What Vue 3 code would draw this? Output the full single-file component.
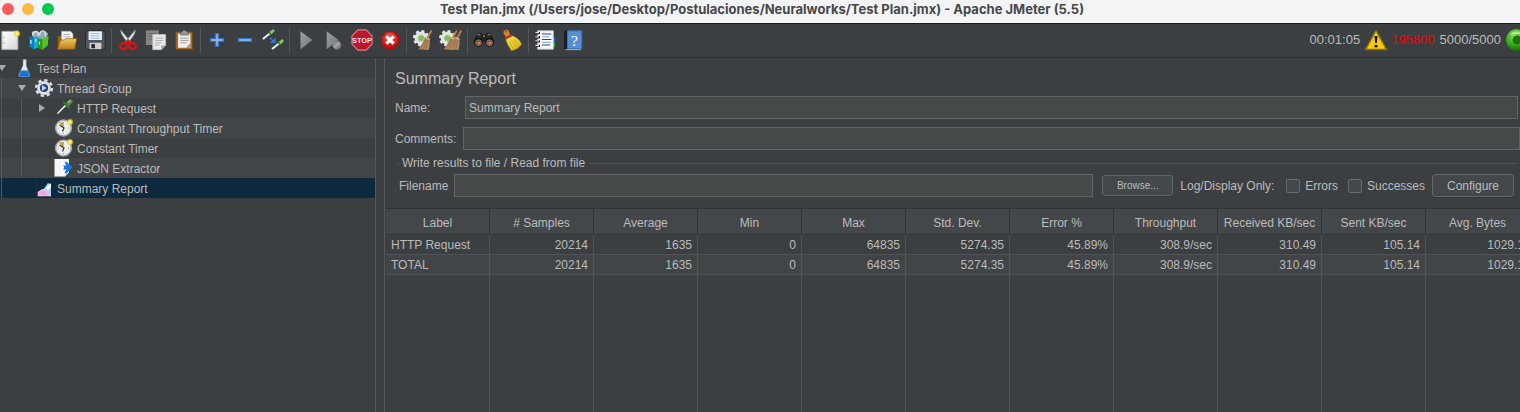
<script setup>
import { ref } from 'vue'

const name = ref('Summary Report')
const comments = ref('')
const filename = ref('')
const errors = ref(false)
const successes = ref(false)

const groups = [
  ['new', 'templates', 'open', 'save'],
  ['cut', 'copy', 'paste'],
  ['expand', 'collapse', 'toggle'],
  ['start', 'start without pauses', 'stop', 'shutdown'],
  ['clear', 'clear all'],
  ['search', 'reset search'],
  ['function helper', 'help']
]

const tree = [
  { label: 'Test Plan', icon: 'flask', level: 0, arrow: 'down' },
  { label: 'Thread Group', icon: 'gear', level: 1, arrow: 'down' },
  { label: 'HTTP Request', icon: 'dropper', level: 2, arrow: 'right' },
  { label: 'Constant Throughput Timer', icon: 'clock', level: 2 },
  { label: 'Constant Timer', icon: 'clock', level: 2 },
  { label: 'JSON Extractor', icon: 'extract', level: 2 },
  { label: 'Summary Report', icon: 'chart', level: 1, selected: true }
]

const columns = ['Label', '# Samples', 'Average', 'Min', 'Max', 'Std. Dev.', 'Error %', 'Throughput', 'Received KB/sec', 'Sent KB/sec', 'Avg. Bytes']
const rows = [
  ['HTTP Request', '20214', '1635', '0', '64835', '5274.35', '45.89%', '308.9/sec', '310.49', '105.14', '1029.1'],
  ['TOTAL', '20214', '1635', '0', '64835', '5274.35', '45.89%', '308.9/sec', '310.49', '105.14', '1029.1']
]
</script>

<template>
  <div class="window">
    <svg class="defs" width="0" height="0" aria-hidden="true">
      <defs>
        <linearGradient id="gold" x1="0" y1="0" x2="0" y2="1"><stop offset="0" stop-color="#f3c969" /><stop offset="1" stop-color="#b97f17" /></linearGradient>
        <linearGradient id="grey" x1="0" y1="0" x2="1" y2="1"><stop offset="0" stop-color="#a0a0a0" /><stop offset="1" stop-color="#747474" /></linearGradient>
        <linearGradient id="paper" x1="0" y1="0" x2="1" y2="1"><stop offset="0" stop-color="#ffffff" /><stop offset="1" stop-color="#d6d6d6" /></linearGradient>
        <linearGradient id="bristle" x1="0" y1="0" x2="1" y2="1"><stop offset="0" stop-color="#fbe66a" /><stop offset="1" stop-color="#d5b20c" /></linearGradient>
        <radialGradient id="red" cx=".5" cy=".3" r=".7"><stop offset="0" stop-color="#f35c4c" /><stop offset="1" stop-color="#bb0b0b" /></radialGradient>
        <radialGradient id="green" cx=".4" cy=".3" r=".75"><stop offset="0" stop-color="#8fe56a" /><stop offset=".55" stop-color="#3aa81c" /><stop offset="1" stop-color="#116004" /></radialGradient>
        <radialGradient id="spark"><stop offset="0" stop-color="#fffbb0" /><stop offset=".5" stop-color="#f3df35" /><stop offset="1" stop-color="#e8d040" stop-opacity="0" /></radialGradient>
        <g id="straw">
          <path d="M20.5 1l1.6 1-4.600 9-2.200-1.100z" fill="#b8834c" />
          <path d="M14.300 8.700l5 2.300c.5 4-.2 8-1 12L7 22c3.500-3.500 5.500-8.500 7.300-13.300z" fill="#b08a62" />
          <path d="M14.800 11l-5 10.500M16 11.500l-3.600 10.800M17.400 12l-2.500 10.500" stroke="#8a673f" stroke-width=".7" fill="none" />
          <path d="M14.300 9l5 2.300" stroke="#dcb888" stroke-width="1.300" />
        </g>
        <g id="cog">
          <circle cx="9" cy="9" r="5" fill="none" stroke="#e4e4e4" stroke-width="4.500" />
          <circle cx="9" cy="9" r="7.500" fill="none" stroke="#e4e4e4" stroke-width="3" stroke-dasharray="3.200 2.690" />
          <circle cx="9" cy="9" r="3.300" fill="#78c93f" stroke="#b8b8b8" />
        </g>
        <g id="pipette">
          <path d="M0 9L7.500 3" stroke="#8d9a91" stroke-width="2.600" />
          <path d="M0 8.700L7.500 2.700" stroke="#f0f3ef" stroke-width="1.600" />
          <path d="M8 2.500L11 0" stroke="#7cc862" stroke-width="3.400" stroke-linecap="round" />
          <path d="M6.200.8l3.200 3.800" stroke="#3a5a34" stroke-width="1.100" />
        </g>
      </defs>
    </svg>

    <header class="titlebar">
      <div class="lights"><i class="close"></i><i class="minimise"></i><i class="zoom"></i></div>
      <h1>Test Plan.jmx (/Users/jose/Desktop/Postulaciones/Neuralworks/Test Plan.jmx) - Apache JMeter (5.5)</h1>
    </header>

    <div class="toolbar">
      <div v-for="(group, g) in groups" :key="g" class="group">
        <button v-for="icon in group" :key="icon" type="button" :aria-label="icon">
          <svg viewBox="0 0 24 24" aria-hidden="true">
            <template v-if="icon === 'new'">
              <path d="M2 2.500h17.500v20H2z" fill="url(#paper)" stroke="#a6a6a6" />
              <path d="M4 8.500v1.500M4 14.500V16" stroke="#888" />
              <circle cx="18.500" cy="5" r="4.200" fill="url(#spark)" />
            </template>
            <template v-else-if="icon === 'templates'">
              <path d="M4 3l6-1.500 2 2L18 2l4 3-2 6-14 2z" fill="#93aab1" />
              <path d="M5 7c0-4 5-6 6-2v3m2-1c-1-5 5-7 6-2v3" fill="none" stroke="#dbe7e9" stroke-width="1.500" />
              <path d="M1.500 8l5 1v13l-5-2.500z" fill="#087ebb" /><path d="M6.500 9l5-1v12l-5 2z" fill="#19a9e5" />
              <path d="M10.500 10l5 1v12l-5-2.500z" fill="#239b19" /><path d="M15.500 11l7-3-1 10-6 5z" fill="#51c42c" />
              <path d="M3.200 12v4M8.500 11v3M12.500 14v3" stroke="#d9f4f0" stroke-width="1.400" />
            </template>
            <template v-else-if="icon === 'open'">
              <path d="M2 8h6l2 2h10v10H2z" fill="#98630c" />
              <path d="M6 2.500h10l2.500 3V14H6z" fill="#f5f5f5" stroke="#aaa" stroke-width=".6" />
              <path d="M8 6h7M8 8.500h8" stroke="#999" stroke-width=".8" />
              <path d="M5 12h4l1.500-1.500h12L20.500 22H1.500z" fill="url(#gold)" stroke="#94610b" stroke-width=".8" />
            </template>
            <template v-else-if="icon === 'save'">
              <path d="M2 2h20l1 2v18H3l-1.500-2z" fill="#51565e" stroke="#25282c" />
              <path d="M5 2.500h14.500V12H5z" fill="#eef4fa" /><path d="M7 5h10M7 7.500h10M7 10h10" stroke="#8fb4da" />
              <path d="M6 15h13v7H6z" fill="#cfcfcf" /><path d="M8 16.500h4v4.500H8z" fill="#24272b" />
            </template>
            <template v-else-if="icon === 'cut'">
              <path d="M4 1c0 4 3.500 9 8.500 14l2-1.500zM20 1c0 4-3.500 9-8.500 14l-2-1.500z" fill="#e3e3e3" stroke="#989898" stroke-width=".7" />
              <ellipse cx="7.300" cy="18.500" rx="3.800" ry="3.200" transform="rotate(-25 7.300 18.500)" fill="none" stroke="#d61518" stroke-width="2.600" />
              <ellipse cx="16.700" cy="18.500" rx="3.800" ry="3.200" transform="rotate(25 16.700 18.500)" fill="none" stroke="#d61518" stroke-width="2.600" />
              <path d="M9 16l3-2.500 3 2.500" fill="none" stroke="#d61518" stroke-width="2.600" />
            </template>
            <template v-else-if="icon === 'copy'">
              <path d="M1 1.500h14v16H1z" fill="#858585" /><path d="M3.500 5h9M3.500 8h6M3.500 11h5" stroke="#696969" />
              <path d="M8.500 6h14v12l-4.500 4.500H8.500z" fill="#e9e9e9" stroke="#bdbdbd" /><path d="M11 10h9M11 12.500h9M11 15h7M11 17.500h5" stroke="#aaa" /><path d="M18 22.500V18h4.500z" fill="#999" />
            </template>
            <template v-else-if="icon === 'paste'">
              <path d="M3 3h18.500v19.500H3z" fill="#a96a1d" stroke="#704411" /><path d="M5.500 5h13.500v15.500H5.500z" fill="#ececec" />
              <path d="M8 3.500h2l1-2h3l1 2h2v3H8z" fill="#999d9f" stroke="#555" stroke-width=".7" /><path d="M8 10h9M8 12.500h9M8 15h7" stroke="#9c9c9c" /><path d="M14 20.500l5-5v5z" fill="#999" />
            </template>
            <path v-else-if="icon === 'expand'" d="M10.500 5h3v5.500H19v3h-5.500V19h-3v-5.500H5v-3h5.500z" fill="#9ac5f2" stroke="#3775c4" stroke-width="1.500" />
            <path v-else-if="icon === 'collapse'" d="M5 10.500h14v3H5z" fill="#9ac5f2" stroke="#3775c4" stroke-width="1.500" />
            <template v-else-if="icon === 'toggle'">
              <use href="#pipette" x="1" y="2" /><use href="#pipette" x="11" y="13" />
              <path d="M8.500 9.500l5 4.500M14 10v4.500H9.500" fill="none" stroke="#347bd1" stroke-width="1.700" />
            </template>
            <path v-else-if="icon === 'start'" d="M6 2.500l13 9.500-13 10z" fill="url(#grey)" />
            <template v-else-if="icon === 'start without pauses'">
              <path d="M4 2.500l13 9.500-13 10z" fill="url(#grey)" /><circle cx="15" cy="17.500" r="4.500" fill="#8e8e8e" stroke="#777" /><path d="M12.300 20l5.400-5" stroke="#b6b6b6" stroke-width="1.300" />
            </template>
            <template v-else-if="icon === 'stop'">
              <path d="M7.500 1h9L23 7.500v9L16.500 23h-9L1 16.500v-9z" fill="#b7192a" stroke="#d98188" stroke-width="1.200" />
              <text x="12" y="15.500" text-anchor="middle" class="stop-word">STOP</text>
            </template>
            <template v-else-if="icon === 'shutdown'">
              <path d="M8.500 3h7l5.500 5.500v7L15.500 21h-7L3 15.500v-7z" fill="url(#red)" stroke="#c00c0c" stroke-width="1.500" /><path d="M8 8l8 8M16 8l-8 8" stroke="#fff" stroke-width="3.400" />
            </template>
            <template v-else-if="icon === 'clear'"><use href="#cog" x="1" y="1" /><use href="#straw" /></template>
            <template v-else-if="icon === 'clear all'"><use href="#cog" x="-1" y="1" /><use href="#straw" x="-3" /><use href="#straw" x="2" /></template>
            <template v-else-if="icon === 'search'">
              <path d="M6 4.500l4 1 1 6H2zM18 4.500l-4 1-1 6h9z" fill="#292929" stroke="#111" /><path d="M9.500 8h5v6h-5z" fill="#222" />
              <circle cx="6" cy="14.500" r="5" fill="#161616" /><circle cx="18" cy="14.500" r="5" fill="#161616" /><circle cx="6" cy="15" r="3.200" fill="#915032" stroke="#777" /><circle cx="18" cy="15" r="3.200" fill="#915032" stroke="#777" />
              <path d="M5 6l3 .5M16 6.500l3-.5M11 8h2" stroke="#a5a5a5" /><circle cx="6.500" cy="15.500" r="1.300" fill="#db8353" /><circle cx="18.500" cy="15.500" r="1.300" fill="#db8353" />
            </template>
            <template v-else-if="icon === 'reset search'">
              <path d="M2.500 4c0-4 6-4.500 6.500-.5l1.500 4-5 2z" fill="#d08a35" stroke="#7c4b14" stroke-width=".7" />
              <circle cx="5.500" cy="3" r=".9" fill="#5c3a12" />
              <path d="M5 10.500l7-3.500c5 2 9 5 10.500 9.500-2 3.500-6.500 6.500-11.500 7-2-4-5-8-6-13z" fill="url(#bristle)" stroke="#927500" stroke-width=".7" />
              <path d="M9 13l4.500 9M11.500 12l5.500 8M14 11.500l6 6.500" stroke="#c4a30f" stroke-width=".9" /><path d="M4.500 10.500l7.500-4" stroke="#c82d1b" stroke-width="2.500" />
            </template>
            <template v-else-if="icon === 'function helper'">
              <path d="M19 9h4v6h-4z" fill="#1471e2" /><path d="M19 15h4v5h-4z" fill="#23a62a" /><path d="M4 2h17v20H4z" fill="#fafafa" stroke="#ccc" />
              <path d="M8.500 5.500H19M8.500 11.500H19M8.500 17.500h9" stroke="#254a88" stroke-width="1.200" /><path d="M8.500 8.500h8M8.500 14.500h10" stroke="#6998d8" />
              <path d="M1.500 4.500h5M1.500 9h5M1.500 13.500h5M1.500 18.500h5" stroke="#111" stroke-width="2.500" /><path d="M1.500 4h4M1.500 8.500h4M1.500 13h4M1.500 18h4" stroke="#e3e3e3" stroke-width="1.400" />
            </template>
            <template v-else>
              <path d="M3 3l3-1.500v20L3 22.500z" fill="#172333" stroke="#111" /><path d="M6 2h15.500v19.500H6z" fill="#548fd5" stroke="#3874bc" /><path d="M3.500 22.500h17" stroke="#bbb" />
              <text x="13.500" y="18" text-anchor="middle" class="help-mark">?</text>
            </template>
          </svg>
        </button>
      </div>
      <div class="status">
        <span>00:01:05</span>
        <svg class="warning" viewBox="0 0 24 24" aria-hidden="true"><path d="M12 2.500L22.500 21.500h-21z" fill="#f6cd08" stroke="#8f7100" stroke-width="1.500" stroke-linejoin="round" /><path d="M10.500 8h3l-.6 7h-1.800z" fill="#171717" /><circle cx="12" cy="18" r="1.600" fill="#171717" /></svg>
        <span class="alert">195800</span>
        <span class="threads">5000/5000</span>
        <svg class="running" viewBox="0 0 24 24" aria-hidden="true"><circle cx="12" cy="12" r="11" fill="url(#green)" /><circle cx="12" cy="12" r="4.500" fill="#1d7110" /><path d="M5 7c3-5 11-5 14 0-4-1.500-10-1.500-14 0z" fill="#c9f5b3" opacity=".7" /></svg>
      </div>
    </div>

    <div class="body">
      <nav class="tree" aria-label="Test plan elements">
        <ul>
          <li v-for="(node, i) in tree" :key="i" :class="{ selected: node.selected }">
            <span v-for="n in node.level" :key="n" class="guide"></span>
            <span class="toggle" :class="node.arrow"></span>
            <svg viewBox="0 0 20 20" aria-hidden="true">
              <template v-if="node.icon === 'flask'">
                <path d="M9.200 1.500h3v6l3.300 9c.5 1.500 0 2-1.500 2H6.500c-1.500 0-2-.5-1.500-2l4.200-9z" fill="#dbe8ef" stroke="#8ba0b0" stroke-width=".6" /><path d="M7.300 12.500h6.600l1.700 5-.8 1H5.800l-.8-1z" fill="#1476d8" /><path d="M10 3.500v4l-2 4" stroke="#fff" fill="none" />
              </template>
              <template v-else-if="node.icon === 'gear'">
                <circle cx="10" cy="10" r="7.900" fill="none" stroke="#dcdfe3" stroke-width="2.400" stroke-dasharray="3.300 2.905" /><circle cx="10" cy="10" r="5.500" fill="#234776" stroke="#dcdfe3" stroke-width="2.800" /><path d="M8 7l4.500 3L8 13z" fill="#bfd8fa" />
              </template>
              <template v-else-if="node.icon === 'dropper'">
                <path d="M1.500 18l3-2L14 7l-2-2-8.500 9z" fill="#8fa79f" stroke="#252b2b" stroke-width=".9" /><path d="M3.500 15.500l9-9" stroke="#e3ece8" stroke-width="1.200" />
                <path d="M13 7l3.700-3.700" stroke="#4e8f46" stroke-width="4" stroke-linecap="round" /><path d="M10 4.500L15 9.500" stroke="#3c7435" stroke-width="2" stroke-linecap="round" /><path d="M14 4.500l2.200-2" stroke="#a5dd92" stroke-width="1.400" />
              </template>
              <template v-else-if="node.icon === 'clock'">
                <circle cx="9.500" cy="10" r="7.900" fill="#eeeee9" stroke="#a2a2b5" stroke-width="1.500" /><path d="M9.500 10L5 4.500l5-.5z" fill="#c4a33b" /><path d="M5.500 7L10 10l-1.500 3.500" fill="none" stroke="#333" stroke-width="1.200" /><path d="M4 10h.8M9.500 16v-.8M15 10h-.8" stroke="#777" /><circle cx="16" cy="4" r="3.700" fill="url(#spark)" />
              </template>
              <template v-else-if="node.icon === 'extract'">
                <path d="M.5 1H15v13.500L11 18.500H.5z" fill="#f6f6f6" /><path d="M11 18.500l.5-4 3.500-.5z" fill="#a9c7e5" /><path d="M9 7.500h3.500L10.500 4h2.300L18.500 9.500 12.800 15h-2.300l2-3.500H9c1.500-1.200 1.500-2.800 0-4z" fill="#1974d4" />
              </template>
              <template v-else>
                <path d="M2.500 2v16M2.500 18H18" stroke="#303641" stroke-dasharray="1 1" /><path d="M4 18v-4l5-3 8 7z" fill="#efb0dd" /><path d="M9 12l5-7 3 1.500V18h-3l-5-4z" fill="#a9d1f2" /><path d="M12 10l5-5v4l-3 4z" fill="#f3f8ff" /><path d="M4 14l5-3 4 4 4 3H4z" fill="#f4a7e0" stroke="#fce0f6" stroke-width=".5" />
              </template>
            </svg>
            <span class="node-name">{{ node.label }}</span>
          </li>
        </ul>
      </nav>
      <div class="splitter"></div>
      <main>
        <h2>Summary Report</h2>
        <div class="field name"><label for="name">Name:</label><input id="name" v-model="name" type="text"></div>
        <div class="field comments"><label for="comments">Comments:</label><input id="comments" v-model="comments" type="text"></div>
        <fieldset>
          <legend>Write results to file / Read from file</legend>
          <div class="file-row">
            <label for="filename">Filename</label>
            <input id="filename" v-model="filename" type="text">
            <button type="button" class="browse">Browse...</button>
            <span class="only">Log/Display Only:</span>
            <label class="check"><input v-model="errors" type="checkbox">Errors</label>
            <label class="check"><input v-model="successes" type="checkbox">Successes</label>
            <button type="button" class="configure">Configure</button>
          </div>
        </fieldset>
        <div class="results">
          <table>
            <thead><tr><th v-for="column in columns" :key="column" scope="col">{{ column }}</th></tr></thead>
            <tbody><tr v-for="row in rows" :key="row[0]"><td v-for="(cell, c) in row" :key="c">{{ cell }}</td></tr></tbody>
          </table>
        </div>
      </main>
    </div>
  </div>
</template>

<style>
body { background: #3c3f41; }
</style>

<style scoped>
* { box-sizing: border-box; }
.window { display: flex; flex-direction: column; height: 100vh; overflow: hidden; background: #3c3f41; color: #bbbbbb; font: 12px/20px "Liberation Sans", Arial, sans-serif; }
.defs { position: absolute; }
button, input { font: inherit; color: inherit; }
.titlebar { display: flex; align-items: flex-start; flex: none; height: 24px; background: #f3f4f6; border-bottom: 1px solid #18191a; }
.lights { display: flex; gap: 8px; flex: 1; padding: 3px 2px; }
.lights i { width: 12px; height: 12px; border-radius: 50%; }
.close { background: #ff5b5c; }
.minimise { background: #ffb842; }
.zoom { background: #00c94f; }
h1 { margin: 0; color: #47484a; font: 700 13px/18px Inter, sans-serif; white-space: nowrap; }
.titlebar::after { content: ""; flex: 1; }
.toolbar { display: flex; align-items: center; flex: none; height: 34px; padding-bottom: 1px; border-bottom: 1px solid #323232; margin-left: -3px; }
.group { display: flex; align-items: center; }
.group + .group { padding-left: 5px; background: linear-gradient(#555759, #555759) 2px 50% / 1px 25px no-repeat; }
.group button { display: flex; align-items: center; justify-content: center; width: 28px; height: 32px; padding: 0; border: 0; background: none; }
.group svg { width: 22px; height: 22px; overflow: visible; }
.stop-word { font: 700 8px "Liberation Sans", sans-serif; fill: #f5d9dc; }
.help-mark { font: 17px "Liberation Serif", serif; fill: #ffffff; }
.status { display: flex; align-items: center; margin-left: auto; font-size: 13px; }
.warning { width: 24px; height: 24px; margin: 0 3px 0 4px; }
.alert { color: #f20000; }
.threads { margin-left: 5px; }
.running { width: 24px; height: 24px; margin: 0 -9px 0 4px; }
.body { display: flex; flex: 1; min-height: 0; }
.tree { flex: none; width: 376px; border-right: 1px solid #555759; }
ul { margin: 0; padding: 0; list-style: none; }
li { display: flex; align-items: center; height: 20px; white-space: nowrap; }
li:nth-child(even) { background: #414547; }
li.selected { background: #0d293e; }
.node-name { line-height: 18px; padding-top: 2px; }
.guide { width: 20px; height: 20px; background: linear-gradient(#54585a, #54585a) 1px 0 / 1px 100% no-repeat; }
.toggle { display: flex; justify-content: center; width: 13px; margin-left: -5px; }
.toggle::before { content: ""; width: 0; height: 0; }
.toggle.down::before { border: 4px solid transparent; border-top: 6px solid #a7a9aa; border-bottom: 0; }
.toggle.right::before { border: 4px solid transparent; border-left: 6px solid #a7a9aa; border-right: 0; }
li svg { width: 20px; height: 20px; margin: 0 3px 0 6px; }
.splitter { flex: none; width: 9px; border-right: 1px solid #555759; }
main { display: flex; flex-direction: column; flex: 1; min-width: 0; }
h2 { margin: 11px 0 7px 10px; font-size: 16px; line-height: 20px; font-weight: 400; }
.field { display: flex; align-items: center; flex: none; height: 23px; margin-left: 10px; }
.field label { flex: none; }
.name { margin-right: 2px; }
.name label { width: 70px; }
.comments { margin-top: 8px; }
.comments label { width: 68px; }
input[type="text"] { flex: 1; min-width: 0; height: 23px; padding: 0 3px; border: 1px solid #646464; border-radius: 0; background: #45494a; outline: 0; }
fieldset { min-width: 0; margin: 3px 2px 0 12px; padding: 1px 4px 11px 2px; border: 0; border-top: 1px solid #515151; }
legend { margin-left: 3px; padding: 0 4px 0 2px; margin-left: 1px; }
.file-row { display: flex; align-items: center; white-space: nowrap; }
.file-row > label:first-child { width: 55px; }
.file-row button { border: 1px solid #646668; border-radius: 3px; background: #43494b; box-shadow: 0 1px #323537; padding: 0; }
.browse { width: 71px; height: 21px; margin: 0 7px 0 9px; font-size: 10px; }
.configure { width: 82px; height: 23px; margin-left: 7px; }
.only { width: 106px; }
.check { display: flex; align-items: center; }
.check + .check { margin-left: 10px; }
.check input { appearance: none; width: 14px; height: 14px; margin: 0 5px 0 0; border: 1px solid #6b6b6b; border-radius: 2px; background: #43494b; }
.check input:checked { background: #9aa0a3; }
.results { flex: 1; min-height: 0; margin-left: 1px; overflow: hidden; border-top: 1px solid #313435; background: repeating-linear-gradient(90deg, transparent 0 103px, #505355 103px 104px); }
table { width: 1144px; table-layout: fixed; border-collapse: separate; border-spacing: 0; }
th { height: 26px; padding: 2px 0 0; border-right: 1px solid #323536; border-bottom: 1px solid #323536; background: #43474a; font-weight: 400; }
td { height: 20px; padding: 1px 5px 0; border-right: 1px solid #505355; border-bottom: 1px solid #505355; background: #3c3f41; line-height: 18px; text-align: right; }
td:first-child { text-align: left; }
tbody tr:nth-child(even) td { background: #414547; }
</style>
